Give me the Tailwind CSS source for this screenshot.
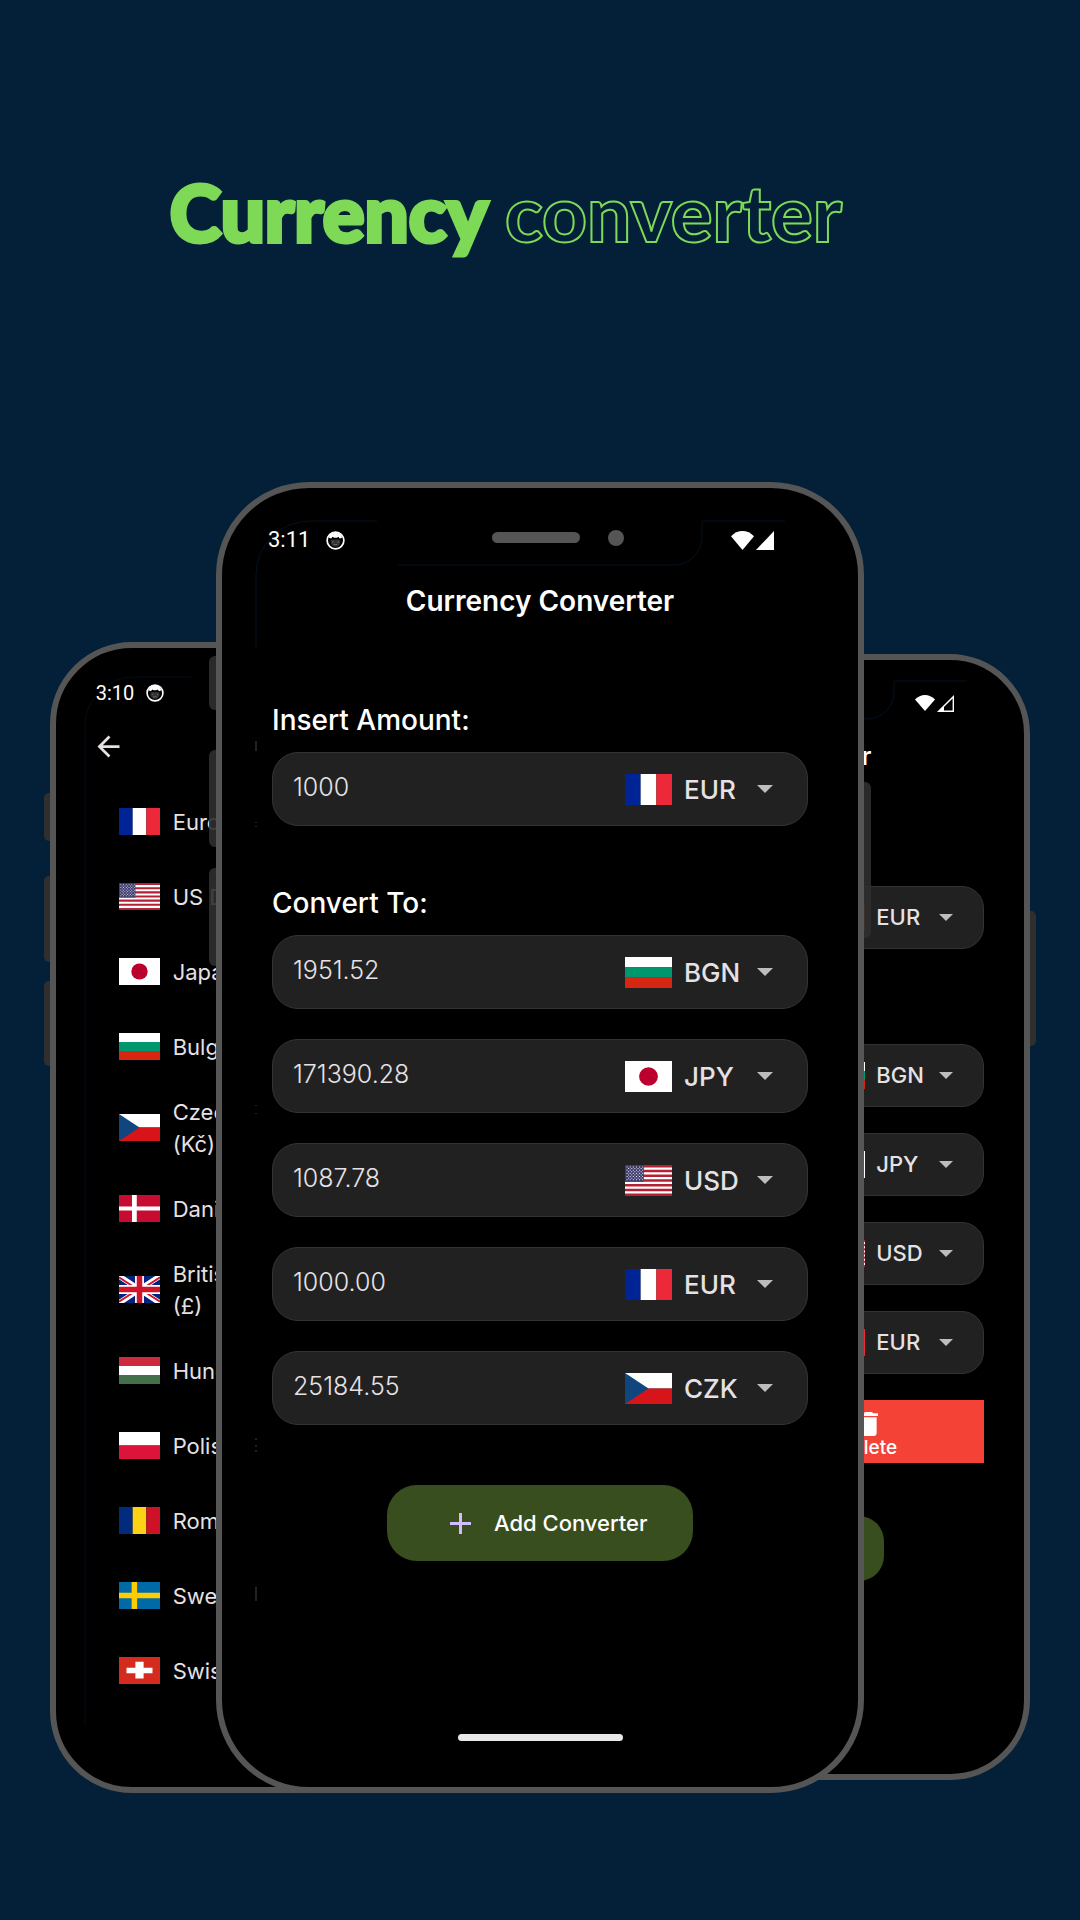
<!DOCTYPE html>
<html lang="en">
<head>
<meta charset="utf-8">
<meta name="viewport" content="width=device-width, initial-scale=1">
<title>Currency converter</title>
<script src="https://cdn.jsdelivr.net/npm/@tailwindcss/browser@4"></script>
</head>
<body class="min-h-screen bg-[#032038] font-['Inter','Noto_Sans',sans-serif] text-[#e6e1e5]">

<!-- Shared flags and icons -->
<svg class="hidden" aria-hidden="true">
  <symbol id="fr" viewBox="0 0 60 40" preserveAspectRatio="none"><path fill="#002395" d="M0 0h20v40H0z"/><path fill="#fff" d="M20 0h20v40H20z"/><path fill="#ed2939" d="M40 0h20v40H40z"/></symbol>
  <symbol id="us" viewBox="0 0 60 39" preserveAspectRatio="none"><path fill="#fff" d="M0 0h60v39H0z"/><path stroke="#b22234" stroke-width="3" d="M0 1.500h60M0 7.500h60M0 13.500h60M0 19.500h60M0 25.500h60M0 31.500h60M0 37.500h60"/><path fill="#3c3b6e" d="M0 0h24v21H0z"/><path stroke="#fff" stroke-width="1.200" stroke-dasharray="1.300 2.700" d="M2 2.500h21M2 6.500h21M2 10.500h21M2 14.500h21M2 18.500h21M4 4.500h18M4 8.500h18M4 12.500h18M4 16.500h18"/></symbol>
  <symbol id="jp" viewBox="0 0 60 40" preserveAspectRatio="none"><path fill="#fff" d="M0 0h60v40H0z"/><circle cx="30" cy="20" r="12" fill="#bc002d"/></symbol>
  <symbol id="bg" viewBox="0 0 60 39" preserveAspectRatio="none"><path fill="#fff" d="M0 0h60v13H0z"/><path fill="#00966e" d="M0 13h60v13H0z"/><path fill="#d62612" d="M0 26h60v13H0z"/></symbol>
  <symbol id="cz" viewBox="0 0 60 40" preserveAspectRatio="none"><path fill="#fff" d="M0 0h60v20H0z"/><path fill="#d7141a" d="M0 20h60v20H0z"/><path fill="#11457e" d="M0 0l30 20L0 40z"/></symbol>
  <symbol id="dk" viewBox="0 0 60 40" preserveAspectRatio="none"><path fill="#c60c30" d="M0 0h60v40H0z"/><path stroke="#fff" stroke-width="6" d="M0 20h60"/><path stroke="#fff" stroke-width="7" d="M22.500 0v40"/></symbol>
  <symbol id="gb" viewBox="0 0 60 40" preserveAspectRatio="none"><path fill="#00247d" d="M0 0h60v40H0z"/><path stroke="#fff" stroke-width="8" d="M0 0l60 40M60 0L0 40"/><path stroke="#cf142b" stroke-width="2.600" d="M0 2l26 17M60 2L34 19M0 38l26-17M60 38L34 21"/><path stroke="#fff" stroke-width="13" d="M30 0v40M0 20h60"/><path stroke="#cf142b" stroke-width="8" d="M30 0v40M0 20h60"/></symbol>
  <symbol id="hu" viewBox="0 0 60 39" preserveAspectRatio="none"><path fill="#cd2a3e" d="M0 0h60v13H0z"/><path fill="#fff" d="M0 13h60v13H0z"/><path fill="#436f4d" d="M0 26h60v13H0z"/></symbol>
  <symbol id="pl" viewBox="0 0 60 40" preserveAspectRatio="none"><path fill="#fff" d="M0 0h60v20H0z"/><path fill="#dc143c" d="M0 20h60v20H0z"/></symbol>
  <symbol id="ro" viewBox="0 0 60 40" preserveAspectRatio="none"><path fill="#002b7f" d="M0 0h20v40H0z"/><path fill="#fcd116" d="M20 0h20v40H20z"/><path fill="#ce1126" d="M40 0h20v40H40z"/></symbol>
  <symbol id="se" viewBox="0 0 60 40" preserveAspectRatio="none"><path fill="#006aa7" d="M0 0h60v40H0z"/><path stroke="#fecc00" stroke-width="8" d="M0 20h60M22.500 0v40"/></symbol>
  <symbol id="ch" viewBox="0 0 60 40" preserveAspectRatio="none"><path fill="#d52b1e" d="M0 0h60v40H0z"/><path fill="#fff" d="M24 7h12v9h13v8H36v8H24v-8H11v-8h13z"/></symbol>
  <symbol id="caret" viewBox="0 0 16 8" preserveAspectRatio="none"><path fill="#bdbdbd" d="M0 0h16L8 8z"/></symbol>
  <symbol id="wifi" viewBox="0 0 24 20" preserveAspectRatio="none"><path fill="#fff" d="M12 20L0 5.500C3.500 2 7.500 0 12 0s8.500 2 12 5.500z"/></symbol>
  <symbol id="bot" viewBox="0 0 20 20"><circle cx="10" cy="10" r="8.800" fill="none" stroke="#fff" stroke-width="1.800"/><path fill="#fff" d="M3 7C4.500 2 7 1 10 1s5.500 1 7 6l-2.500 1-1.500-2-1.500 1h-3L7 6 5.500 8z"/><path fill="#333" d="M5 9.500l2-.5h6l2 .5v3c-1 3-3 4-5 4s-4-1-5-4z"/><path fill="#777" d="M6.500 11h1.500v1H6.500zM12 11h1.500v1H12zM8 14h4v.800H8z"/></symbol>
</svg>

<header class="flex h-[482px] items-start justify-center pt-[156px] pr-[68px]">
  <h1 class="flex items-baseline gap-[17px] font-['Lato',sans-serif] text-[78px] leading-[112px] font-black whitespace-nowrap text-[#7ed957]">
    <span class="[-webkit-text-stroke:4px_#7ed957]">Currency</span>
    <span class="text-transparent [-webkit-text-stroke:2px_#7ed957]">converter</span>
  </h1>
</header>

<main class="grid items-start overflow-hidden pb-[127px]">

  <!-- Right phone -->
  <section class="relative mt-[172px] mr-[4.6%] w-[51.6%] justify-self-end rounded-[80px] border-6 border-[#555] bg-black pt-[31px] pb-[193px] [grid-area:1/1]">
    <i class="absolute top-[251px] -right-[12px] h-[135px] w-[6px] rounded-r-[5px] bg-[#2f2f2f]"></i>
    <svg class="absolute top-[20px] left-[358px] h-[40px] w-[130px]" fill="none" stroke="#04111f" aria-hidden="true"><path d="M0 39h30a27 27 0 0 0 27-27V1h73"/></svg>
    <div class="flex h-6 items-center justify-end gap-[2px] pr-[70px]">
      <svg class="h-[16px] w-[20px]"><use href="#wifi"/></svg>
      <svg class="h-[17px] w-[17px]" viewBox="0 0 17 17" fill="none"><path stroke="#fff" stroke-width="1.400" d="M1.700 16.300L16.300 1.700v14.600z"/><path fill="#fff" d="M1 17l6-6v6z"/></svg>
    </div>
    <h2 class="mt-[27px] text-center text-[25px] leading-7 font-semibold text-white">Currency Converter</h2>
    <div class="px-10">
      <label for="r0" class="mt-[74px] block text-[24px] leading-7 font-medium text-white">Insert Amount:</label>
      <div class="mt-[14px] flex h-[63px] items-center rounded-[22px] border border-[#333] bg-[#212121] pr-[30px] pl-[18px]">
        <input id="r0" value="1000" class="min-w-0 flex-1 bg-transparent text-[22px] font-light">
        <svg class="mr-[11px] h-[27px] w-[40px]"><use href="#fr"/></svg>
        <select aria-label="Source currency" class="w-[63px] appearance-none bg-transparent text-[22px] font-medium"><option>EUR</option></select>
        <svg class="h-[7px] w-[14px]"><use href="#caret"/></svg>
      </div>
      <h3 class="mt-[53px] text-[24px] leading-7 font-medium text-white">Convert To:</h3>
      <div class="mt-[14px] flex flex-col gap-[26px]">
        <div class="flex h-[63px] items-center rounded-[22px] border border-[#333] bg-[#212121] pr-[30px] pl-[18px]">
          <input aria-label="Amount in BGN" value="1951.52" class="min-w-0 flex-1 bg-transparent text-[22px] font-light">
          <svg class="mr-[11px] h-[27px] w-[40px]"><use href="#bg"/></svg>
          <select aria-label="Currency" class="w-[63px] appearance-none bg-transparent text-[22px] font-medium"><option>BGN</option></select>
          <svg class="h-[7px] w-[14px]"><use href="#caret"/></svg>
        </div>
        <div class="flex h-[63px] items-center rounded-[22px] border border-[#333] bg-[#212121] pr-[30px] pl-[18px]">
          <input aria-label="Amount in JPY" value="171390.28" class="min-w-0 flex-1 bg-transparent text-[22px] font-light">
          <svg class="mr-[11px] h-[27px] w-[40px]"><use href="#jp"/></svg>
          <select aria-label="Currency" class="w-[63px] appearance-none bg-transparent text-[22px] font-medium"><option>JPY</option></select>
          <svg class="h-[7px] w-[14px]"><use href="#caret"/></svg>
        </div>
        <div class="flex h-[63px] items-center rounded-[22px] border border-[#333] bg-[#212121] pr-[30px] pl-[18px]">
          <input aria-label="Amount in USD" value="1087.78" class="min-w-0 flex-1 bg-transparent text-[22px] font-light">
          <svg class="mr-[11px] h-[27px] w-[40px]"><use href="#us"/></svg>
          <select aria-label="Currency" class="w-[63px] appearance-none bg-transparent text-[22px] font-medium"><option>USD</option></select>
          <svg class="h-[7px] w-[14px]"><use href="#caret"/></svg>
        </div>
        <div class="flex h-[63px] items-center rounded-[22px] border border-[#333] bg-[#212121] pr-[30px] pl-[18px]">
          <input aria-label="Amount in EUR" value="1000.00" class="min-w-0 flex-1 bg-transparent text-[22px] font-light">
          <svg class="mr-[11px] h-[27px] w-[40px]"><use href="#fr"/></svg>
          <select aria-label="Currency" class="w-[63px] appearance-none bg-transparent text-[22px] font-medium"><option>EUR</option></select>
          <svg class="h-[7px] w-[14px]"><use href="#caret"/></svg>
        </div>
        <button class="flex h-[63px] w-1/2 flex-col items-center self-end bg-[#f44336] pt-[12px] text-[19px] leading-6 font-medium text-white">
          <svg class="h-[24px] w-[19px] shrink-0" viewBox="0 0 14 18" preserveAspectRatio="none" fill="#fff"><path d="M1 16c0 1.100.900 2 2 2h8c1.100 0 2-.900 2-2V4H1zM14 1h-3.500l-1-1h-5l-1 1H0v2h14z"/></svg>
          Delete
        </button>
      </div>
    </div>
    <button class="mx-auto mt-[53px] flex h-[65px] w-[265px] items-center justify-center rounded-[25px] bg-[#384e1e] text-[18px] font-medium text-white">+ Add Converter</button>
  </section>

  <!-- Left phone -->
  <section class="relative mt-[160px] ml-[4.6%] w-[52.7%] rounded-[82px] border-6 border-[#555] bg-black pt-[33px] pb-[79px] [grid-area:1/1]">
    <i class="absolute top-[145px] -left-[12px] h-[48px] w-[6px] rounded-l-[5px] bg-[#2f2f2f]"></i>
    <i class="absolute top-[228px] -left-[12px] h-[86px] w-[6px] rounded-l-[5px] bg-[#2f2f2f]"></i>
    <i class="absolute top-[333px] -left-[12px] h-[85px] w-[6px] rounded-l-[5px] bg-[#2f2f2f]"></i>
    <svg class="absolute top-[28px] left-[28px] h-[1090px] w-[110px]" fill="none" stroke="#030d18" aria-hidden="true"><path d="M107 1H50A49 49 0 0 0 1 50v1000"/></svg>
    <div class="relative flex h-6 items-center gap-[12px] pl-10 font-['Roboto',sans-serif] text-[20px] leading-6 text-white">
      <time>3:10</time>
      <svg class="size-[18px]"><use href="#bot"/></svg>
    </div>
    <button aria-label="Back" class="relative mt-[25px] ml-[36px] block">
      <svg class="size-[33px]" viewBox="0 0 24 24" fill="#e6e1e5"><path d="M20 11H7.830l5.590-5.590L12 4l-8 8 8 8 1.410-1.410L7.830 13H20z"/></svg>
    </button>
    <ul class="relative mt-[21px] flex flex-col pl-[63px] text-[22px] leading-8">
      <li class="flex h-[75px] items-center gap-[13px]"><svg class="h-[27px] w-[41px]"><use href="#fr"/></svg>Euro (€)</li>
      <li class="flex h-[75px] items-center gap-[13px]"><svg class="h-[27px] w-[41px]"><use href="#us"/></svg>US Dollar ($)</li>
      <li class="flex h-[75px] items-center gap-[13px]"><svg class="h-[27px] w-[41px]"><use href="#jp"/></svg>Japanese Yen (¥)</li>
      <li class="flex h-[75px] items-center gap-[13px]"><svg class="h-[27px] w-[41px]"><use href="#bg"/></svg>Bulgarian Lev (лв)</li>
      <li class="flex h-[87px] items-center gap-[13px]"><svg class="h-[27px] w-[41px]"><use href="#cz"/></svg><span>Czech Koruna<br>(Kč)</span></li>
      <li class="flex h-[75px] items-center gap-[13px]"><svg class="h-[27px] w-[41px]"><use href="#dk"/></svg>Danish Krone (kr)</li>
      <li class="flex h-[87px] items-center gap-[13px]"><svg class="h-[27px] w-[41px]"><use href="#gb"/></svg><span>British Pound<br>(£)</span></li>
      <li class="flex h-[75px] items-center gap-[13px]"><svg class="h-[27px] w-[41px]"><use href="#hu"/></svg>Hungarian Forint (Ft)</li>
      <li class="flex h-[75px] items-center gap-[13px]"><svg class="h-[27px] w-[41px]"><use href="#pl"/></svg>Polish Zloty (zł)</li>
      <li class="flex h-[75px] items-center gap-[13px]"><svg class="h-[27px] w-[41px]"><use href="#ro"/></svg>Romanian Leu (lei)</li>
      <li class="flex h-[75px] items-center gap-[13px]"><svg class="h-[27px] w-[41px]"><use href="#se"/></svg>Swedish Krona (kr)</li>
      <li class="flex h-[75px] items-center gap-[13px]"><svg class="h-[27px] w-[41px]"><use href="#ch"/></svg>Swiss Franc (Fr)</li>
    </ul>
  </section>

  <!-- Front phone -->
  <section class="relative w-[60%] justify-self-center rounded-[93px] border-6 border-[#555] bg-black pt-10 pb-[46px] [grid-area:1/1]">
    <i class="absolute top-[168px] -left-[13px] h-[54px] w-[7px] rounded-l-[6px] bg-[#2f2f2f]/90"></i>
    <i class="absolute top-[262px] -left-[13px] h-[97px] w-[7px] rounded-l-[6px] bg-[#2f2f2f]/90"></i>
    <i class="absolute top-[380px] -left-[13px] h-[98px] w-[7px] rounded-l-[6px] bg-[#2f2f2f]/90"></i>
    <i class="absolute top-[294px] -right-[13px] h-[156px] w-[7px] rounded-r-[6px] bg-[#2f2f2f]/90"></i>
    <svg class="absolute top-[32px] left-[33px] h-[1090px] w-[540px]" fill="none" stroke="#04111f" aria-hidden="true"><path d="M122 1H55A54 54 0 0 0 1 55v72M143 45h276a28 28 0 0 0 28-28V1h83"/><path stroke="#444" d="M1 221v10M1 1067v14M1 302v1M1 306v1M1 585v1M1 593v1M1 918v2M1 925v2M1 930v2"/></svg>
    <div class="relative flex h-6 items-center pr-[84px] pl-[46px]">
      <div class="flex w-[224px] items-center gap-[16px] font-['Roboto',sans-serif] text-[22px] leading-6 text-white">
        <time>3:11</time>
        <svg class="size-[19px]"><use href="#bot"/></svg>
      </div>
      <i class="mb-[5px] h-[11px] w-[88px] rounded-full bg-[#555]"></i>
      <i class="mb-1 ml-[28px] size-[16px] rounded-full bg-[#555]"></i>
      <svg class="ml-auto h-[19px] w-[23px]"><use href="#wifi"/></svg>
      <svg class="ml-[2px] h-[19px] w-[18px]" viewBox="0 0 18 19" fill="#fff"><path d="M18 0v19H0z"/></svg>
    </div>
    <h2 class="mt-[33px] text-center text-[28px] leading-8 font-semibold text-white">Currency Converter</h2>
    <div class="px-[50px]">
      <label for="amount" class="mt-[87px] block text-[28px] leading-8 font-medium text-white">Insert Amount:</label>
      <div class="mt-4 flex h-[74px] items-center rounded-[26px] border border-[#333] bg-[#212121] pr-[34px] pl-5">
        <input id="amount" value="1000" class="min-w-0 flex-1 bg-transparent pb-[3px] text-[25px] font-light">
        <svg class="mr-3 h-[31px] w-[47px]"><use href="#fr"/></svg>
        <select aria-label="Source currency" class="w-[73px] appearance-none bg-transparent text-[26px] font-medium"><option>EUR</option></select>
        <svg class="h-[8px] w-[16px]"><use href="#caret"/></svg>
      </div>
      <h3 class="mt-[61px] text-[28px] leading-8 font-medium text-white">Convert To:</h3>
      <div class="mt-4 flex flex-col gap-[30px]">
        <div class="flex h-[74px] items-center rounded-[26px] border border-[#333] bg-[#212121] pr-[34px] pl-5">
          <input aria-label="Amount in BGN" value="1951.52" class="min-w-0 flex-1 bg-transparent pb-[3px] text-[25px] font-light">
          <svg class="mr-3 h-[31px] w-[47px]"><use href="#bg"/></svg>
          <select aria-label="Currency" class="w-[73px] appearance-none bg-transparent text-[26px] font-medium"><option>BGN</option></select>
          <svg class="h-[8px] w-[16px]"><use href="#caret"/></svg>
        </div>
        <div class="flex h-[74px] items-center rounded-[26px] border border-[#333] bg-[#212121] pr-[34px] pl-5">
          <input aria-label="Amount in JPY" value="171390.28" class="min-w-0 flex-1 bg-transparent pb-[3px] text-[25px] font-light">
          <svg class="mr-3 h-[31px] w-[47px]"><use href="#jp"/></svg>
          <select aria-label="Currency" class="w-[73px] appearance-none bg-transparent text-[26px] font-medium"><option>JPY</option></select>
          <svg class="h-[8px] w-[16px]"><use href="#caret"/></svg>
        </div>
        <div class="flex h-[74px] items-center rounded-[26px] border border-[#333] bg-[#212121] pr-[34px] pl-5">
          <input aria-label="Amount in USD" value="1087.78" class="min-w-0 flex-1 bg-transparent pb-[3px] text-[25px] font-light">
          <svg class="mr-3 h-[31px] w-[47px]"><use href="#us"/></svg>
          <select aria-label="Currency" class="w-[73px] appearance-none bg-transparent text-[26px] font-medium"><option>USD</option></select>
          <svg class="h-[8px] w-[16px]"><use href="#caret"/></svg>
        </div>
        <div class="flex h-[74px] items-center rounded-[26px] border border-[#333] bg-[#212121] pr-[34px] pl-5">
          <input aria-label="Amount in EUR" value="1000.00" class="min-w-0 flex-1 bg-transparent pb-[3px] text-[25px] font-light">
          <svg class="mr-3 h-[31px] w-[47px]"><use href="#fr"/></svg>
          <select aria-label="Currency" class="w-[73px] appearance-none bg-transparent text-[26px] font-medium"><option>EUR</option></select>
          <svg class="h-[8px] w-[16px]"><use href="#caret"/></svg>
        </div>
        <div class="flex h-[74px] items-center rounded-[26px] border border-[#333] bg-[#212121] pr-[34px] pl-5">
          <input aria-label="Amount in CZK" value="25184.55" class="min-w-0 flex-1 bg-transparent pb-[3px] text-[25px] font-light">
          <svg class="mr-3 h-[31px] w-[47px]"><use href="#cz"/></svg>
          <select aria-label="Currency" class="w-[73px] appearance-none bg-transparent text-[26px] font-medium"><option>CZK</option></select>
          <svg class="h-[8px] w-[16px]"><use href="#caret"/></svg>
        </div>
      </div>
    </div>
    <button class="mx-auto mt-[60px] flex h-[76px] w-[306px] items-center gap-[23px] rounded-[30px] bg-[#384e1e] pl-[63px] text-[22px] font-medium text-white">
      <svg class="size-[21px]" viewBox="0 0 21 21" stroke="#d0bcff" stroke-width="3"><path d="M10.500 0v21M0 10.500h21"/></svg>
      Add Converter
    </button>
    <div class="mx-auto mt-[173px] h-[7px] w-[165px] rounded-full bg-[#e8e8e8]"></div>
  </section>
</main>
</body>
</html>
